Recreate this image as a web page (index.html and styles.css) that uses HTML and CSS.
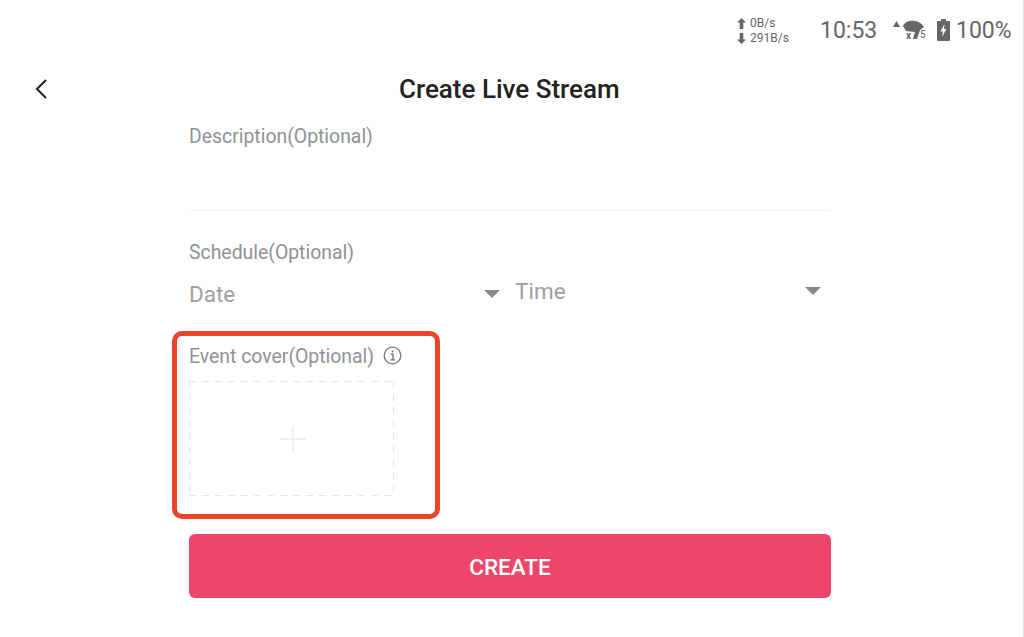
FILE: index.html
```html
<!DOCTYPE html>
<html>
<head>
  <title>Create Live Stream</title>
  <meta name="viewport" content="width=device-width, initial-scale=1.0">
  <link rel="stylesheet" href="styles.css">
</head>
<body>
  <div class="status-bar">
    <div class="speed">
      <div class="speed-row">
        <svg width="9" height="11" viewBox="0 0 9 11"><path d="M4.500 0L9 4.500H6.300V11H2.700V4.500H0z" fill="#666"/></svg>
        <span>0B/s</span>
      </div>
      <div class="speed-row">
        <svg width="9" height="11" viewBox="0 0 9 11"><path d="M4.500 11L0 6.500H2.700V0H6.300V6.500H9z" fill="#666"/></svg>
        <span>291B/s</span>
      </div>
    </div>
    <span class="clock">10:53</span>
    <svg class="signal" width="34" height="24" viewBox="0 0 34 24">
      <path d="M0 9L3.500 3L7 9z" fill="#666"/>
      <path d="M10 8C13 1 26 1 31 9L27 12L24 21L20 21L22 14L13 13z" fill="#666"/>
      <text x="13" y="21" class="signal-x">x</text>
      <text x="27" y="20" class="signal-num">5</text>
    </svg>
    <svg class="battery" width="13" height="22" viewBox="0 0 13 22">
      <path d="M4 0H9V2H12A1 1 0 0 1 13 3V21A1 1 0 0 1 12 22H1A1 1 0 0 1 0 21V3A1 1 0 0 1 1 2H4z" fill="#666"/>
      <path d="M7.500 5L3.500 12.500H6L5 18L9.500 10H7z" fill="#fff"/>
    </svg>
    <span class="percent">100%</span>
  </div>

  <div class="top-bar">
    <button class="back">
      <svg width="14" height="22" viewBox="0 0 14 22"><path d="M12 2L3 11L12 20" fill="none" stroke="#222" stroke-width="2"/></svg>
    </button>
    <h1>Create Live Stream</h1>
  </div>

  <div class="form">
    <div class="field-desc">
      <div class="label">Description(Optional)</div>
    </div>

    <div class="field-schedule">
      <div class="label">Schedule(Optional)</div>
      <div class="pickers">
        <div class="picker picker-date">
          <span>Date</span>
          <i class="arrow"></i>
        </div>
        <div class="picker picker-time">
          <span>Time</span>
          <i class="arrow"></i>
        </div>
      </div>
    </div>

    <div class="field-cover">
      <div class="cover-label">
        <span class="label">Event cover(Optional)</span>
        <svg class="info" width="19" height="19" viewBox="0 0 18 18">
          <circle cx="9" cy="9" r="7.900" fill="none" stroke="#777" stroke-width="1.200"/>
          <path d="M7.400 7.800H9.500V12.800M7.400 13H11.200" fill="none" stroke="#777" stroke-width="1.300"/>
          <circle cx="9.200" cy="5.200" r="1" fill="#777"/>
        </svg>
      </div>
      <div class="cover-box">
        <svg width="28" height="28" viewBox="0 0 28 28"><path d="M14 1V27M1 14H27" stroke="#ececec" stroke-width="1.500"/></svg>
      </div>
    </div>

    <button class="create">CREATE</button>
  </div>
</body>
</html>
```

FILE: styles.css
```css
* {
  box-sizing: border-box;
}

body {
  margin: 0;
  height: 637px;
  overflow: hidden;
  background-color: #fff;
  border-right: 1px solid #e2e2e2;
  font-family: Roboto, sans-serif;
  color: #222;
}

.status-bar {
  display: flex;
  align-items: center;
  height: 60px;
  padding-left: 737px;
  color: #666;
}

.speed {
  width: 83px;
  padding-top: 2px;
  font-size: 12px;
  line-height: 15px;
}

.speed-row {
  display: flex;
  align-items: center;
  gap: 4px;
}

.clock {
  width: 73px;
  font-size: 23px;
}

.signal {
  margin-right: 10px;
}

.signal-x {
  font: bold 10px Roboto, sans-serif;
  fill: #666;
}

.signal-num {
  font: 10px Roboto, sans-serif;
  fill: #666;
}

.battery {
  margin-right: 6px;
}

.percent {
  font-size: 23px;
}

.top-bar {
  display: flex;
  align-items: center;
  height: 58px;
  padding-left: 34px;
}

.back {
  display: flex;
  width: 14px;
  padding: 0;
  border: none;
  background: none;
}

h1 {
  margin: 0 0 0 351px;
  font-size: 26px;
  font-weight: 500;
  color: #222;
}

.form {
  width: 642px;
  margin-left: 189px;
}

.label {
  font-size: 19.400px;
  line-height: 22px;
  color: #8e9299;
}

.field-desc {
  height: 93px;
  padding-top: 8px;
  border-bottom: 1px solid #f3f3f3;
}

.field-schedule {
  padding-top: 31px;
}

.pickers {
  display: flex;
  margin-top: 9px;
  color: #a0a0a0;
  font-size: 22.500px;
}

.picker {
  display: flex;
  align-items: center;
  justify-content: space-between;
}

.picker-date {
  width: 311px;
  height: 34px;
  margin-right: 15px;
  padding-top: 8px;
}

.picker-time {
  flex: 1;
  height: 34px;
  padding-right: 10px;
  padding-top: 2px;
}

.arrow {
  width: 0;
  height: 0;
  border-left: 8px solid transparent;
  border-right: 8px solid transparent;
  border-top: 8px solid #8a8a8a;
}

.field-cover {
  width: 268px;
  height: 188px;
  margin: 24px 0 15px -17px;
  padding: 10px 12px 0;
  border: 5px solid #e8452c;
  border-radius: 10px;
}

.cover-label {
  display: flex;
  align-items: center;
  gap: 9px;
}

.info {
  margin-top: -4px;
}

.cover-box {
  display: flex;
  align-items: center;
  justify-content: center;
  width: 205px;
  height: 115px;
  margin-top: 13px;
  padding-left: 3px;
  background-image:
    repeating-linear-gradient(to right, #e6e6e6 0 7px, transparent 7px 13px),
    repeating-linear-gradient(to right, #e6e6e6 0 7px, transparent 7px 13px),
    repeating-linear-gradient(to bottom, #e6e6e6 0 7px, transparent 7px 13px),
    repeating-linear-gradient(to bottom, #e6e6e6 0 7px, transparent 7px 13px);
  background-size: 100% 1px, 100% 1px, 1px 100%, 1px 100%;
  background-position: top left, bottom left, top left, top right;
  background-repeat: no-repeat;
}

.create {
  display: block;
  width: 100%;
  height: 64px;
  padding-top: 2px;
  border: none;
  border-radius: 6px;
  background-color: #ee456b;
  color: #fff;
  font-family: Roboto, sans-serif;
  font-size: 22.500px;
  font-weight: 500;
}
```
